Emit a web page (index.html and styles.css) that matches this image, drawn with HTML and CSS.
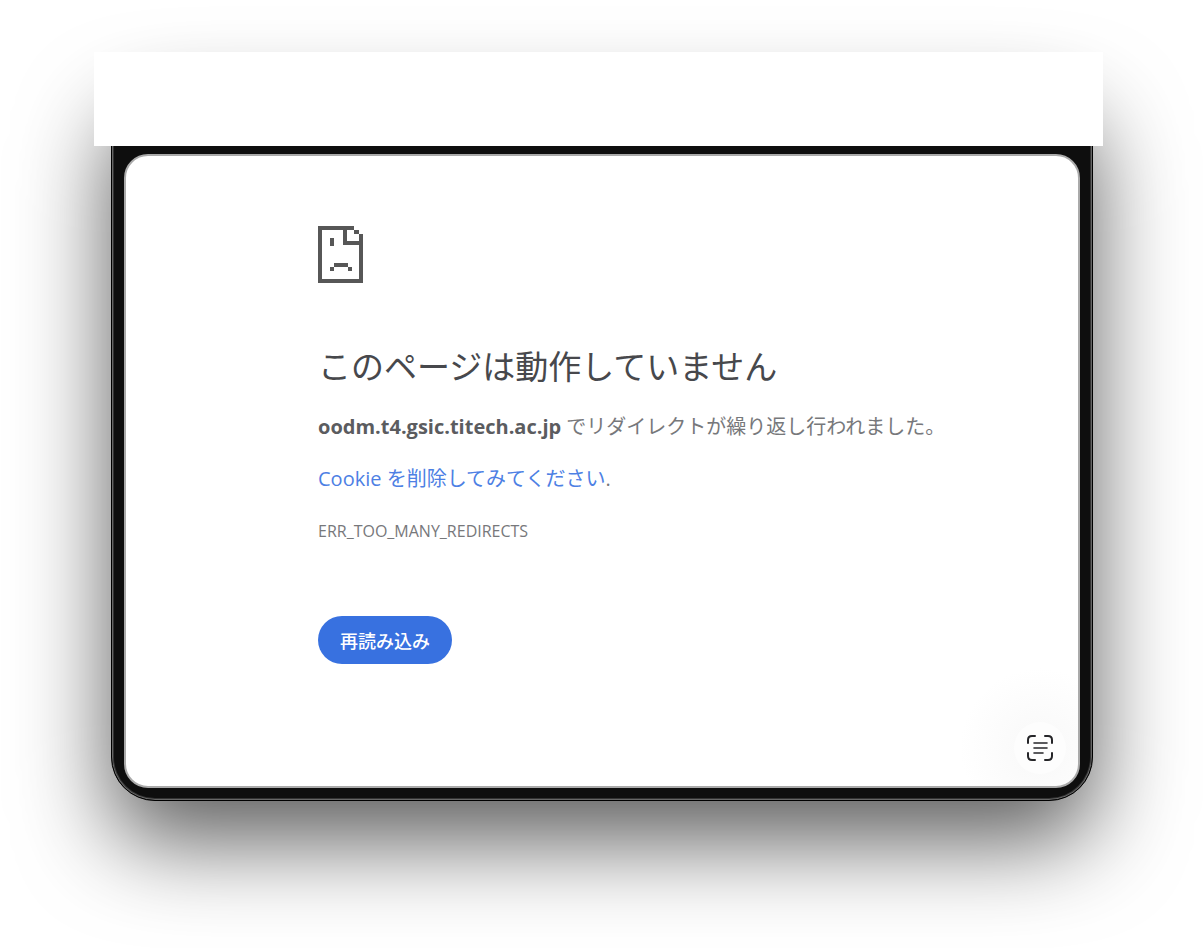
FILE: index.html
```html
<!DOCTYPE html>
<html lang="ja">
<head>
<meta charset="utf-8">
<meta name="viewport" content="width=device-width, initial-scale=1">
<title>このページは動作していません</title>
<link rel="stylesheet" href="styles.css">
</head>
<body>
<div class="stage">
  <div class="cover"></div>
  <div class="device">
    <main class="screen">
      <svg class="sad-page" viewBox="0 0 45 57" aria-hidden="true">
        <path d="M0 0H36V4H29V15H41V8H45V57H0ZM4 4V53H41V19H25V4Z" fill-rule="evenodd"/>
        <path d="M36 4h5v4h-5zM12 12h4v8h-4zM16 37h14v4H16zM12 41h4v4h-4zM30 41h4v4h-4z"/>
      </svg>
      <h1 class="title">このページは動作していません</h1>
      <p class="summary"><strong>oodm.t4.gsic.titech.ac.jp</strong> でリダイレクトが繰り返し行われました。</p>
      <p class="hint"><a class="hint-link" href="#">Cookie を削除してみてください</a>.</p>
      <p class="code">ERR_TOO_MANY_REDIRECTS</p>
      <button class="reload" type="button">再読み込み</button>
      <button class="scan" type="button" aria-label="テキストを認識">
        <svg class="scan-icon" viewBox="0 0 28 28" aria-hidden="true">
          <path class="corner" d="M2 9V6Q2 2 6 2H9M19 2H22Q26 2 26 6V9M26 19V22Q26 26 22 26H19M9 26H6Q2 26 2 22V19"/>
          <path class="line" d="M8 9H21M8 14H21M8 19H17"/>
        </svg>
      </button>
    </main>
  </div>
</div>
</body>
</html>
```
FILE: styles.css
```css
* {
  box-sizing: border-box;
}

body {
  margin: 0;
  background: #fff;
  font-family: "Open Sans", "Noto Sans CJK JP", sans-serif;
  color: #77787b;
}

.stage {
  position: relative;
  min-height: 100vh;
  padding: 76px 111px 147px;
  overflow: hidden;
}

.cover {
  position: absolute;
  z-index: 1;
  top: 52px;
  left: 94px;
  right: 101px;
  height: 94px;
  background: #fff;
}

.device {
  padding: 77px 9px 9px;
  border: 1px solid #000;
  border-radius: 44px;
  background: #0e0e0e;
  box-shadow: inset 0 0 0 1px #666, inset 0 0 0 2px #333, 0 40px 92px rgba(0, 0, 0, 0.64);
}

.screen {
  position: relative;
  margin: 0 3px 3px;
  padding: 70px 136px 122px 192px;
  border: 2px solid #aaa;
  border-radius: 24px;
  background: radial-gradient(circle at 96% 94%, #f8f8f8, #fff 80px);
}

.sad-page {
  display: block;
  width: 45px;
  height: 57px;
  fill: #575757;
}

.title {
  margin: 60px 0 0;
  font-size: 33px;
  font-weight: 400;
  line-height: 48px;
  color: #47484c;
}

.summary,
.hint {
  margin: 20px 0 0;
  font-size: 20px;
  line-height: 32px;
}

.summary {
  white-space: nowrap;
}

.summary strong {
  font-weight: 700;
  color: #5b5c5f;
}

.hint-link {
  color: #4d80e4;
  text-decoration: none;
}

.code {
  margin: 24px 0 0;
  font-size: 16px;
  line-height: 24px;
}

.reload {
  display: block;
  margin: 73px 0 0;
  padding: 0 22px;
  border: 0;
  border-radius: 24px;
  background: #3871e0;
  color: #fff;
  font: 500 18px/48px "Noto Sans CJK JP", sans-serif;
}

.scan {
  position: absolute;
  right: 12px;
  bottom: 12px;
  display: grid;
  place-items: center;
  width: 52px;
  height: 52px;
  padding: 0;
  border: 0;
  border-radius: 50%;
  background: #fdfdfd;
}

.scan-icon {
  width: 28px;
  height: 28px;
  fill: none;
  stroke: #252528;
  stroke-linecap: round;
}

.corner {
  stroke-width: 2;
}

.line {
  stroke-width: 1.6;
}
```
